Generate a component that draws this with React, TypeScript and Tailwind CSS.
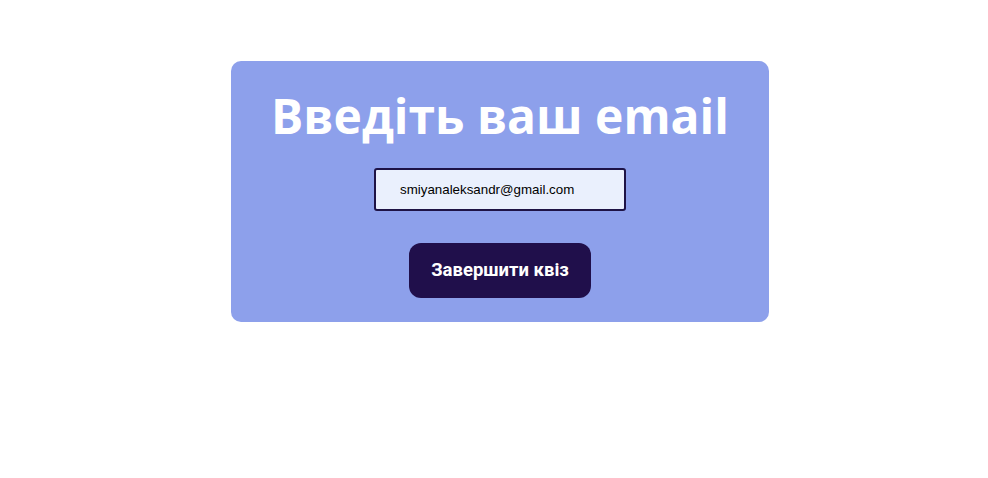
import { useState } from "react";

export default function App() {
  const [email, setEmail] = useState("smiyanaleksandr@gmail.com");

  return (
    <div className="min-h-screen bg-white pt-[61px] pl-3 flex justify-center">
      <div className="w-[538px] h-[261px] bg-[#8da0eb] rounded-[10px] flex flex-col items-center pt-[22px]">
        <h1 className="text-[48px] leading-[66px] font-bold text-white font-['Open_Sans',sans-serif]">
          Введіть ваш email
        </h1>
        <input
          autoFocus
          value={email}
          onChange={(e) => setEmail(e.target.value)}
          className="mt-[19px] w-[252px] h-[43px] border-2 border-[#1e1346] rounded-[3px] bg-[#eaf0fd] pl-[24px] text-[13.333px] text-black font-['Liberation_Sans',Arial,sans-serif] outline-none caret-black"
        />
        <button className="mt-[32px] w-[182px] h-[55px] bg-[#200f4b] rounded-[12px] text-white text-[18.5px] font-bold font-['Roboto',sans-serif]">
          Завершити квіз
        </button>
      </div>
    </div>
  );
}
